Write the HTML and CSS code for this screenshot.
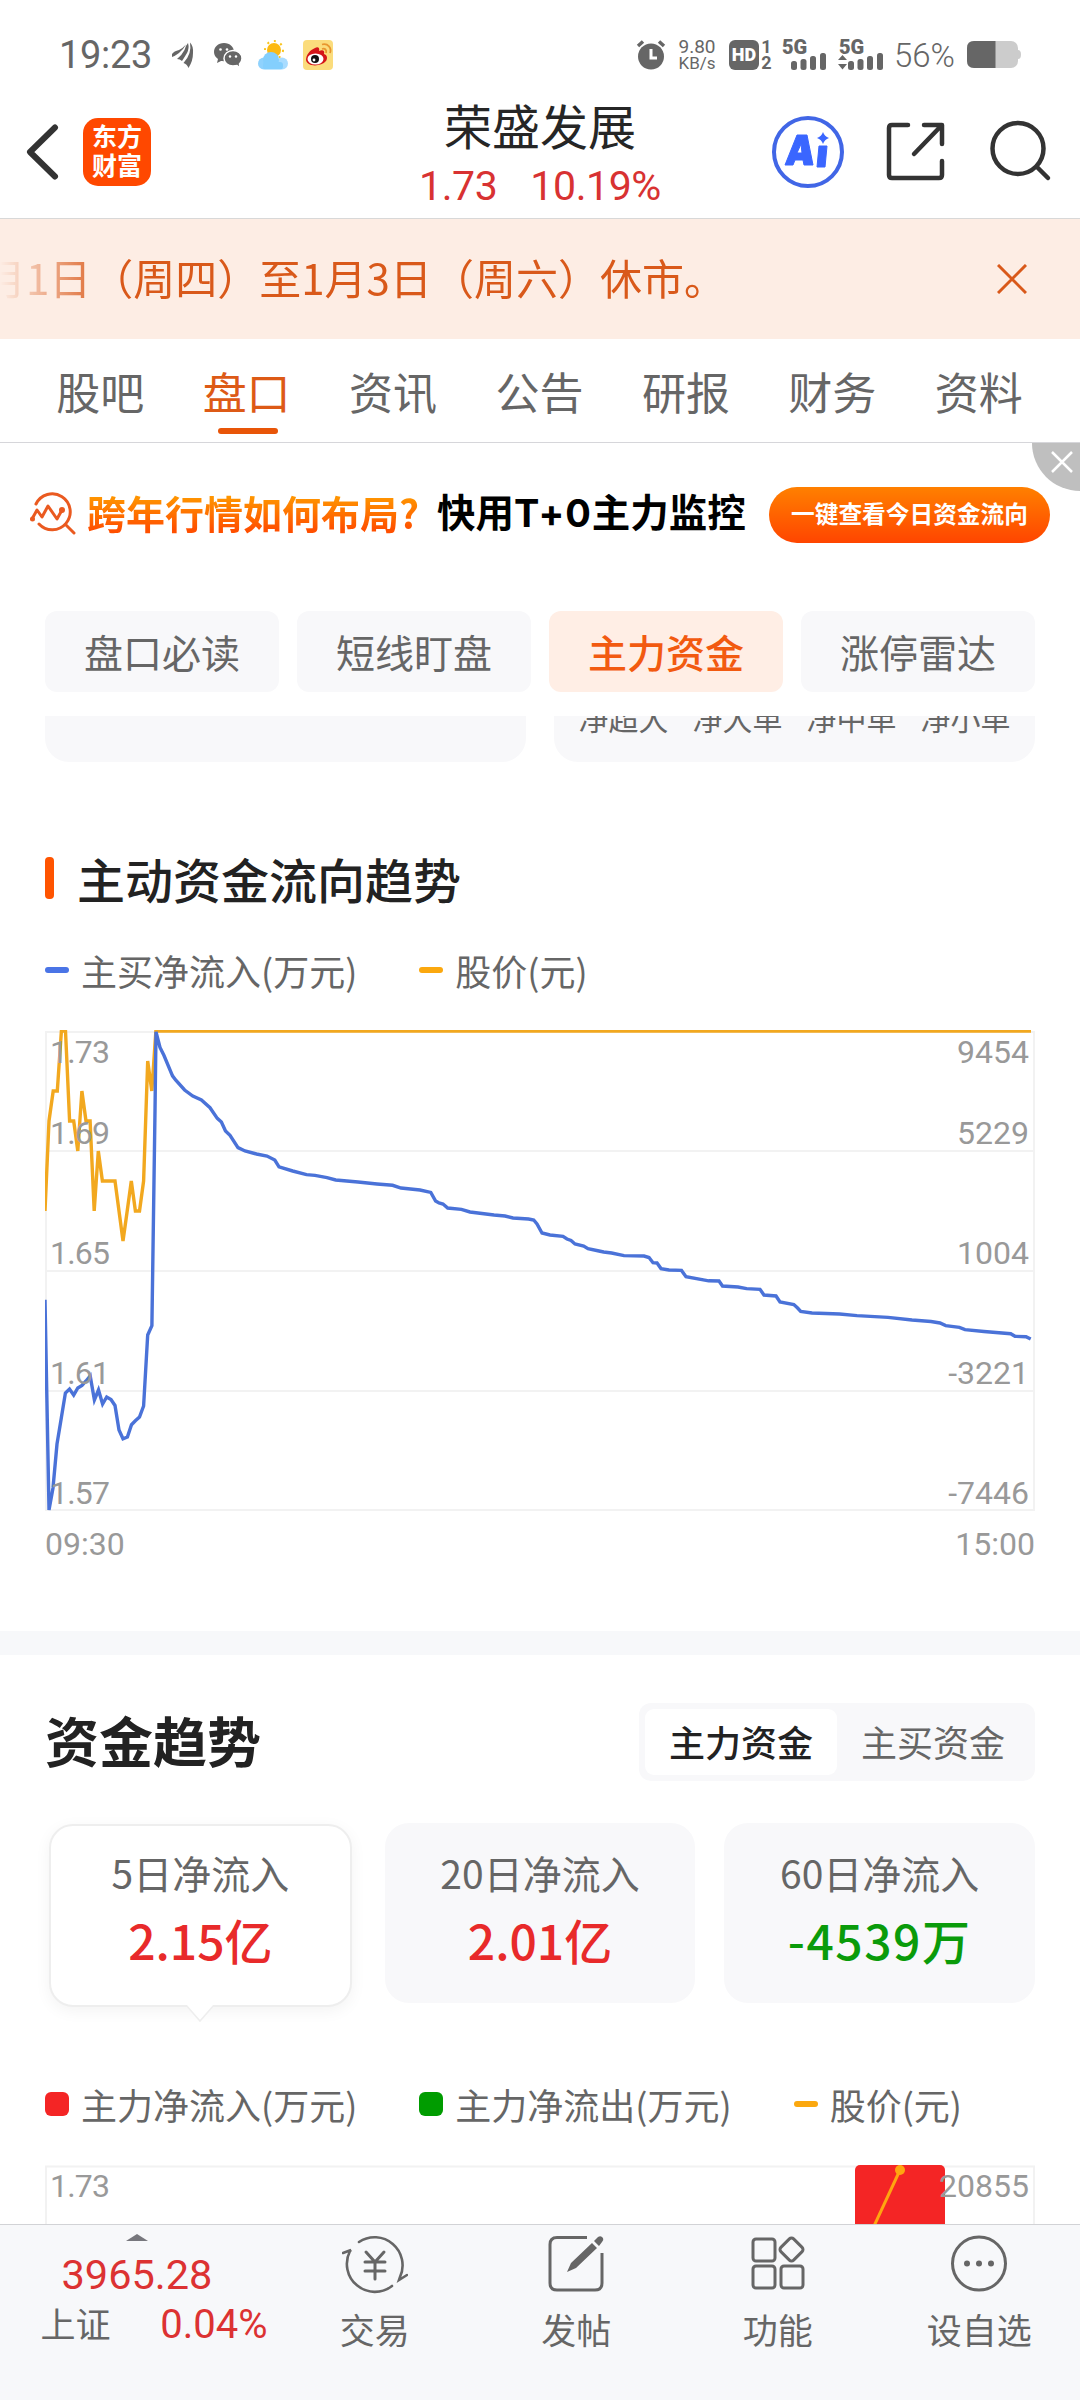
FILE: index.html
```html
<!DOCTYPE html>
<html lang="zh-CN">
<head>
    <meta charset="UTF-8">
    <meta name="viewport" content="width=device-width, initial-scale=1.0">
    <title>荣盛发展</title>
    <link rel="stylesheet" href="styles.css">
</head>
<body>
    <div class="status-bar">
        <span class="time">19:23</span>
        <svg class="icon-plane" width="24" height="28" viewBox="0 0 24 28" fill="#666">
            <path d="M1 13Q3 10 8 9Q12 7 15 3.500Q12 9 8 12Q4 15 1 16Z"/>
            <path d="M6 18Q11 14 13.500 9Q15 4 17 2Q18.500 7 16 12Q13 17 11 20Q9 18 6 18Z"/>
            <path d="M19 1.500Q22.500 5 22 12Q22 20 17.500 27Q16 23 12.500 22Q17 17 18.500 12Q20 7 19 1.500Z"/>
        </svg>
        <svg class="icon-wechat" width="30" height="28" viewBox="0 0 30 28">
            <path d="M11 2C5 2 1 6 1 11C1 14 2.500 16 5 18L4 22L8 20C16 21 21 17 21 11C21 6 17 2 11 2Z" fill="#666"/>
            <path d="M20 9.500C15 9.500 11 13 11 17.500C11 22 15 25 20 25L24 24.500L27 27L26.500 23C28 21.500 29 19.500 29 17.500C29 13 25 9.500 20 9.500Z" fill="#666" stroke="#fff" stroke-width="1.500"/>
            <circle cx="7.500" cy="8.500" r="1.300" fill="#fff"/><circle cx="14" cy="8.500" r="1.300" fill="#fff"/>
            <circle cx="17" cy="15.500" r="1.200" fill="#fff"/><circle cx="23" cy="15.500" r="1.200" fill="#fff"/>
        </svg>
        <svg class="icon-weather" width="30" height="30" viewBox="0 0 30 30">
            <circle cx="16" cy="10" r="9" fill="none" stroke="#f9c51f" stroke-width="2" stroke-dasharray="2 5"/>
            <circle cx="16" cy="10" r="7" fill="#fcb912"/>
            <circle cx="24" cy="23.500" r="6" fill="#a9dcff"/>
            <circle cx="6" cy="23.500" r="6" fill="#8fd2fd"/>
            <circle cx="13" cy="20" r="8" fill="#84cffd"/>
            <rect x="5" y="22" width="20" height="7.500" rx="3" fill="#84cffd"/>
        </svg>
        <svg class="icon-weibo" width="30" height="30" viewBox="0 0 30 30">
            <rect width="30" height="30" rx="4" fill="#fbdc7c"/>
            <path d="M12 8C15 6 17 8 16 11C20 9 22 11 21 14C24 15 25 18 23 21C18 27 4 27 3 20C3 15 7 10 12 8Z" fill="#d41518"/>
            <ellipse cx="12.500" cy="19" rx="8" ry="5.500" fill="#fff"/>
            <circle cx="12" cy="19" r="4" fill="#111"/><circle cx="11" cy="20" r="1.400" fill="#fff"/>
            <path d="M19 9C22 8 24 10 23 13M19 4.500C25 3 29 8 27 13" fill="none" stroke="#e8962e" stroke-width="1.800"/>
        </svg>
        <div class="status-right">
            <svg width="30" height="30" viewBox="0 0 30 30">
                <circle cx="15" cy="16.500" r="13" fill="#666"/>
                <path d="M2 6L7 1.500M28 6L23 1.500" stroke="#666" stroke-width="3.500"/>
                <path d="M15 9V18H21" fill="none" stroke="#fff" stroke-width="3"/>
            </svg>
            <div class="net-speed"><span>9.80</span><span>KB/s</span></div>
            <div class="hd">HD</div>
            <div class="hd-sims"><span>1</span><span>2</span></div>
            <div class="signal">
                <span>5G</span>
                <svg width="36" height="17" viewBox="0 0 36 17" fill="#666">
                    <rect x="0" y="8" width="6" height="9" rx="2.500"/><rect x="9.500" y="6" width="6" height="11" rx="2.500"/>
                    <rect x="19" y="3" width="6" height="14" rx="2.500"/><rect x="29" y="0" width="6" height="17" rx="2.500"/>
                </svg>
            </div>
            <div class="signal signal-2">
                <span>5G</span>
                <svg width="46" height="17" viewBox="-10 0 46 17" fill="#666">
                    <path d="M-10 7L-5.500 2L-1 7ZM-10 11L-5.500 16.500L-1 11Z"/>
                    <rect x="0" y="8" width="6" height="9" rx="2.500"/><rect x="9.500" y="6" width="6" height="11" rx="2.500"/>
                    <rect x="19" y="3" width="6" height="14" rx="2.500"/><rect x="29" y="0" width="6" height="17" rx="2.500"/>
                </svg>
            </div>
            <span class="percent">56%</span>
            <svg width="54" height="28" viewBox="0 0 54 28">
                <rect x="0" y="0" width="51" height="27" rx="7" fill="#ccc"/>
                <path d="M51 9Q54 9 54 13.500Q54 18 51 18Z" fill="#ccc"/>
                <path d="M7 0H28.500V27H7Q0 27 0 20V7Q0 0 7 0Z" fill="#666"/>
            </svg>
        </div>
    </div>

    <header class="header">
        <svg class="back" width="34" height="60" viewBox="0 0 34 60">
            <path d="M29 5.500L4 30L29 54.500" fill="none" stroke="#333" stroke-width="6" stroke-linecap="round" stroke-linejoin="round"/>
        </svg>
        <div class="logo"><span>东方</span><span>财富</span></div>
        <div class="stock">
            <h1>荣盛发展</h1>
            <div class="quote"><span>1.73</span><span>10.19%</span></div>
        </div>
        <div class="header-actions">
            <svg width="74" height="74" viewBox="0 0 74 74">
                <circle cx="37" cy="37" r="34" fill="#fff" stroke="#4166e6" stroke-width="4"/>
                <path d="M26 20H36L42 50H33L32 45H24L22 50H14ZM30 29L26 38H31Z" fill="#3a66ff" stroke="#3a66ff" stroke-linejoin="round" fill-rule="evenodd"/>
                <path d="M48 31H56L54 52H46Z" fill="#3a66ff" stroke="#3a66ff" stroke-linejoin="round"/>
                <path d="M52 17Q53.500 21.500 58 23Q53.500 24.500 52 29Q50.500 24.500 46 23Q50.500 21.500 52 17Z" fill="#3a66ff"/>
            </svg>
            <svg width="60" height="60" viewBox="0 0 60 60" fill="none" stroke="#333" stroke-width="4.500" stroke-linecap="round" stroke-linejoin="round">
                <path d="M22 3H6Q3 3 3 6V53Q3 56 6 56H53Q56 56 56 53V39"/>
                <path d="M38 3H56V22M55 4L28 32"/>
            </svg>
            <svg width="64" height="64" viewBox="0 0 64 64" fill="none" stroke="#333" stroke-width="4.500" stroke-linecap="round">
                <circle cx="29" cy="28.500" r="25.500"/>
                <path d="M48 47L59 58"/>
            </svg>
        </div>
    </header>

    <div class="notice">
        <div class="notice-text">月1日（周四）至1月3日（周六）休市。</div>
        <svg width="30" height="30" viewBox="0 0 30 30">
            <path d="M1 1L29 29M29 1L1 29" stroke="#d9591a" stroke-width="3"/>
        </svg>
    </div>

    <nav class="tabs">
        <a>股吧</a>
        <a class="active">盘口</a>
        <a>资讯</a>
        <a>公告</a>
        <a>研报</a>
        <a>财务</a>
        <a>资料</a>
    </nav>

    <main class="content">
        <div class="ad">
            <svg width="46" height="46" viewBox="0 0 46 46" fill="none" stroke="#ea5a20" stroke-width="3" stroke-linecap="round" stroke-linejoin="round">
                <path d="M6 12A18 18 0 1 1 9 32M36 33L44 41"/>
                <path d="M2 27L7 18L12 25L18 14L27 27L32 18"/>
                <circle cx="32" cy="18" r="1.500"/><circle cx="2.500" cy="27" r="1"/>
            </svg>
            <span class="ad-hot">跨年行情如何布局?</span>
            <span class="ad-text">快用<span class="ad-t0">T+0</span>主力监控</span>
            <span class="ad-button">一键查看今日资金流向</span>
            <span class="ad-close">
                <svg width="22" height="22" viewBox="0 0 22 22"><path d="M1 1L21 21M21 1L1 21" stroke="#fff" stroke-width="2.500"/></svg>
            </span>
        </div>

        <div class="chips">
            <span>盘口必读</span>
            <span>短线盯盘</span>
            <span class="active">主力资金</span>
            <span>涨停雷达</span>
        </div>

        <!-- cards scrolled partly under the sticky chips -->
        <div class="scrolled">
            <div class="scrolled-card"></div>
            <div class="scrolled-card">
                <span>净超大</span><span>净大单</span><span>净中单</span><span>净小单</span>
            </div>
        </div>

        <section class="flow">
            <h2>主动资金流向趋势</h2>
            <div class="legend">
                <span><i class="dash blue"></i>主买净流入(万元)</span>
                <span><i class="dash yellow"></i>股价(元)</span>
            </div>
            <svg class="chart" width="990" height="482" viewBox="0 0 990 482">
                <path d="M1 2H989V480H1ZM1 121H989M1 241H989M1 361H989" fill="none" stroke="#f2f2f2" stroke-width="2"/>
                <polyline class="line-price" points="0,181 4,91 8.200,61 12.300,61 16.400,1 20.500,1 24.600,91 28.700,91 32.800,121 36.900,61 41,91 45.100,91 49.200,181 53.300,121 57.400,151 70,151 74,181 78,211 82.200,181 86.300,151 90.400,181 94.500,181 98.600,151 102.700,31 106.800,61 110.900,1 986,1"/>
                <polyline class="line-flow" points="0,269.700 4,480 8,458 12,414 16.300,388 20.400,363 24.500,359 28.700,365 32.800,358 37,355.500 41,351 45.200,346 49.400,370 53.500,360 57.600,374 61.700,367 66,369.500 70,375.500 74,400 78,408.800 82.400,407 86.500,394.700 90.600,390.600 94.500,387 98.600,376 102.700,305 106.900,295.600 110,81 111,1.800 115,17.400 119,25.500 127.500,45.800 130.600,50 139.600,60 147.800,66 156.400,70 165,77.700 172.300,88.400 176.400,92 180.500,101 185,105.400 193,117.600 200,121 211.500,124 222,126 229.800,130 234,136.900 247.700,141 261.500,144.600 270,145.400 282,147.600 290.700,150 313,152 332,154 347.600,155.300 356,158 375,160 385.800,162.400 390.600,171 394,173 398,174 402.700,178 416.400,179.400 425,182 449,185 460,186 468,188 483.600,189 488.700,190 492,194 497,203 505,205 518,206.400 522,209 526,210.500 530,214 538.700,216 543,218.600 554,221 558.700,222 566.600,223 579,225.600 599,226 604,227.500 608,232.700 612,233 616,238.600 624,240 636.500,240.400 641,246.700 663.700,250.800 674,251 677.500,256 693,257 701.600,258.600 715,259.300 719,265 731,266 735,272 748.800,274.500 752.600,278 755.700,281.500 767,283 794.600,284 812,285.600 843,287.400 867,290 886,291.500 895,293 900.700,295.600 914.400,297.400 920,299.600 939,301.500 965.700,303.700 970,306.300 981,306.700 985.700,309"/>
                <g class="axis axis-left">
                    <text x="5" y="33">1.73</text>
                    <text x="5" y="114">1.69</text>
                    <text x="5" y="234">1.65</text>
                    <text x="5" y="354">1.61</text>
                    <text x="5" y="474">1.57</text>
                </g>
                <g class="axis axis-right">
                    <text x="984" y="33">9454</text>
                    <text x="984" y="114">5229</text>
                    <text x="984" y="234">1004</text>
                    <text x="984" y="354">-3221</text>
                    <text x="984" y="474">-7446</text>
                </g>
            </svg>
            <div class="hours"><span>09:30</span><span>15:00</span></div>
        </section>

        <section class="trend">
            <div class="trend-head">
                <h2>资金趋势</h2>
                <div class="segment">
                    <span class="active">主力资金</span>
                    <span>主买资金</span>
                </div>
            </div>
            <div class="cards">
                <div class="card active">
                    <span>5日净流入</span>
                    <b>2.15亿</b>
                    <svg class="pointer" width="30" height="18" viewBox="0 0 30 18"><path d="M1 0L15 16L29 0" fill="#fff" stroke="#eee" stroke-width="1.500"/></svg>
                </div>
                <div class="card">
                    <span>20日净流入</span>
                    <b>2.01亿</b>
                </div>
                <div class="card">
                    <span>60日净流入</span>
                    <b class="down">-4539万</b>
                </div>
            </div>
            <div class="legend">
                <span><i class="box red"></i>主力净流入(万元)</span>
                <span><i class="box green"></i>主力净流出(万元)</span>
                <span><i class="dash yellow"></i>股价(元)</span>
            </div>
            <svg class="chart" width="990" height="240" viewBox="0 0 990 240">
                <path d="M1 240V1.500H989V240" fill="none" stroke="#f2f2f2" stroke-width="2"/>
                <rect x="810" y="0" width="90" height="240" rx="5" fill="#f42525"/>
                <path d="M855 5L804 115" stroke="#ffa510" stroke-width="3"/>
                <circle cx="855" cy="5" r="5" fill="#ffa510"/>
                <g class="axis axis-left"><text x="5" y="32">1.73</text></g>
                <g class="axis axis-right"><text x="984" y="32">20855</text></g>
            </svg>
        </section>
    </main>

    <footer class="bottom-bar">
        <div class="index">
            <i class="caret"></i>
            <span class="index-value">3965.28</span>
            <div class="index-row"><span>上证</span><span class="index-rate">0.04%</span></div>
        </div>
        <div class="action">
            <svg width="66" height="60" viewBox="0 0 66 60" fill="none" stroke="#666" stroke-width="2.600" stroke-linecap="round">
                <path d="M17 8A28 28 0 0 1 58 43L57 46L65 41M50 52A28 28 0 0 1 8 17L9 16L1 19"/>
                <path d="M24 18L33 28L42 18M33 28V45M23 28H43M23 37H43" stroke-width="3"/>
            </svg>
            <span>交易</span>
        </div>
        <div class="action">
            <svg width="66" height="60" viewBox="0 0 66 60">
                <path d="M44 3.500H14Q7 3.500 7 10.500V49Q7 56 14 56H52Q59 56 59 49V19" fill="none" stroke="#666" stroke-width="3"/>
                <path d="M24 38L28 29L49 9L54 14L33 34ZM51 7L55 3Q58 1 60 4Q61 6 59 8L56 12Z" fill="#666"/>
            </svg>
            <span>发帖</span>
        </div>
        <div class="action">
            <svg width="66" height="60" viewBox="0 0 66 60" fill="none" stroke="#666" stroke-width="3">
                <rect x="8" y="5" width="22" height="22" rx="3"/>
                <rect x="8" y="32" width="22" height="22" rx="3"/>
                <rect x="36" y="32" width="22" height="22" rx="3"/>
                <rect x="37.500" y="6.500" width="18" height="18" rx="3" transform="rotate(45 46.500 15.500)"/>
            </svg>
            <span>功能</span>
        </div>
        <div class="action">
            <svg width="66" height="60" viewBox="0 0 66 60">
                <circle cx="33" cy="29.500" r="26.500" fill="none" stroke="#666" stroke-width="3"/>
                <circle cx="21" cy="29.500" r="3" fill="#666"/><circle cx="33" cy="29.500" r="3" fill="#666"/><circle cx="45" cy="29.500" r="3" fill="#666"/>
            </svg>
            <span>设自选</span>
        </div>
    </footer>
</body>
</html>
```

FILE: styles.css
```css
* {
    margin: 0;
    padding: 0;
    box-sizing: border-box;
}

body {
    width: 1080px;
    height: 2400px;
    overflow: hidden;
    display: flex;
    flex-direction: column;
    background-color: #fff;
    color: #666;
    font-family: "Noto Sans CJK SC", sans-serif;
    line-height: 1;
}

svg {
    display: block;
    flex: none;
}

i {
    display: block;
}

/* status bar */
.status-bar {
    height: 73px;
    flex: none;
    display: flex;
    align-items: center;
    padding: 37px 59px 0 59px;
    font-family: Roboto, sans-serif;
}

.time {
    width: 112px;
    font-size: 38px;
    letter-spacing: -0.3px;
}

.icon-wechat {
    margin-left: 18px;
}

.icon-weather {
    margin-left: 15px;
}

.icon-weibo {
    margin-left: 15px;
}

.status-right {
    margin-left: auto;
    display: flex;
    align-items: center;
}

.net-speed {
    width: 38px;
    margin: 0 13px 0 12px;
    display: flex;
    flex-direction: column;
    align-items: center;
    font-size: 17px;
    line-height: 16px;
}

.net-speed span:first-child {
    font-size: 19px;
}

.hd {
    width: 30px;
    height: 30px;
    border-radius: 6px;
    background-color: #666;
    color: #fff;
    font-size: 18px;
    font-weight: 900;
    line-height: 30px;
    text-align: center;
}

.hd-sims {
    width: 15px;
    margin-right: 8px;
    display: flex;
    flex-direction: column;
    align-items: center;
    font-size: 18px;
    font-weight: bold;
    line-height: 16px;
}

.signal {
    width: 45px;
    height: 30px;
    display: flex;
    flex-direction: column;
    align-items: flex-end;
    font-size: 20px;
    font-weight: 900;
    line-height: 14px;
}

.signal span {
    width: 100%;
    height: 13px;
}

.signal-2 {
    margin: 0 10px 0 12px;
}

.percent {
    width: 64px;
    margin-right: 9px;
    font-size: 33px;
    font-weight: 300;
}

/* header */
.header {
    height: 146px;
    flex: none;
    display: flex;
    align-items: center;
    padding: 12px 27px 0 26px;
    border-bottom: 1px solid #d8d8d8;
    position: relative;
}

.logo {
    width: 68px;
    height: 68px;
    margin-left: 23px;
    border-radius: 15px;
    background-color: #ff4800;
    color: #fff;
    display: flex;
    flex-direction: column;
    align-items: center;
    justify-content: center;
    padding-bottom: 3px;
    font-size: 25px;
    font-weight: bold;
    line-height: 29px;
}

.stock {
    position: absolute;
    left: 0;
    right: 0;
    top: 25px;
    pointer-events: none;
    text-align: center;
}

.stock h1 {
    color: #262626;
    font-size: 48px;
    font-weight: normal;
    line-height: 52px;
}

.quote {
    margin-top: 10px;
    display: flex;
    justify-content: center;
    gap: 33px;
    color: #d83232;
    font-family: Roboto, sans-serif;
    font-size: 41px;
    line-height: 52px;
    letter-spacing: -0.4px;
}

.header-actions {
    margin-left: auto;
    display: flex;
    align-items: center;
}

.header-actions svg:nth-child(2) {
    margin: 0 43px 0 41px;
}

/* notice */
.notice {
    height: 120px;
    flex: none;
    display: flex;
    align-items: center;
    padding-right: 53px;
    background-color: #fdede4;
    color: #d9591a;
}

.notice-text {
    flex: 1;
    margin-top: -5px;
    text-indent: -16px;
    font-size: 42px;
    line-height: 60px;
    white-space: nowrap;
    -webkit-mask-image: linear-gradient(to right, transparent, #000 110px);
    mask-image: linear-gradient(to right, transparent, #000 110px);
}

/* tabs */
.tabs {
    height: 104px;
    flex: none;
    display: flex;
    padding: 0 28px 0 27px;
    border-bottom: 1px solid #d6d6da;
    font-size: 44px;
    line-height: 104px;
    text-align: center;
}

.tabs a {
    flex: 1;
    position: relative;
}

.tabs .active {
    color: #dd5a16;
}

.tabs .active::after {
    content: "";
    position: absolute;
    left: 50%;
    bottom: 8px;
    width: 60px;
    height: 6px;
    margin-left: -29px;
    border-radius: 3px;
    background-color: #e85508;
}

.content {
    flex: 1;
    min-height: 0;
    overflow: hidden;
}

/* ad banner */
.ad {
    height: 143px;
    display: flex;
    align-items: center;
    padding: 0 30px;
    position: relative;
    font-weight: bold;
    white-space: nowrap;
}

.ad-hot {
    width: 350px;
    margin: -6px 0 0 11px;
    font-size: 39px;
    line-height: 50px;
    background: linear-gradient(#ff9a00 15%, #ff5000 85%);
    -webkit-background-clip: text;
    background-clip: text;
    color: transparent;
}

.ad-text {
    width: 316px;
    margin-top: -6px;
    color: #000;
    font-size: 38.500px;
}

.ad-t0 {
    font-family: Inter, sans-serif;
    font-size: 38px;
    letter-spacing: 1px;
}

.ad-button {
    width: 281px;
    height: 56px;
    margin-left: 16px;
    border-radius: 28px;
    background: linear-gradient(#ff8000, #ff4500);
    color: #fff;
    font-size: 23.700px;
    line-height: 52px;
    text-align: center;
}

.ad-close {
    position: absolute;
    top: 0;
    right: 0;
    width: 48px;
    height: 48px;
    padding: 8px 0 0 19px;
    border-bottom-left-radius: 48px;
    background-color: #bfbfbf;
}

/* chips */
.chips {
    display: flex;
    gap: 18px;
    padding: 25px 45px 24px;
}

.chips span {
    flex: 1;
    height: 81px;
    border-radius: 12px;
    background-color: #f8f8fa;
    font-size: 39px;
    line-height: 80px;
    text-align: center;
}

.chips .active {
    background-color: #ffeee5;
    color: #f25a10;
    font-weight: 500;
}

.scrolled {
    height: 46px;
    overflow: hidden;
    display: flex;
    align-items: flex-end;
    gap: 28px;
    padding: 0 45px;
}

.scrolled-card {
    flex: 1;
    height: 90px;
    display: flex;
    justify-content: center;
    align-items: flex-end;
    gap: 24px;
    padding-bottom: 30px;
    border-radius: 24px;
    background-color: #f8f8fa;
    font-size: 30px;
}

/* fund flow chart */
.flow {
    height: 869px;
    padding: 86px 45px 0;
}

.flow h2 {
    display: flex;
    align-items: center;
    color: #222;
    font-size: 48px;
    font-weight: 500;
    line-height: 60px;
}

.flow h2::before {
    content: "";
    width: 9px;
    height: 42px;
    margin: 0 23px 0 0;
    border-radius: 4px;
    background-color: #ff5400;
}

.legend {
    display: flex;
    gap: 62px;
    margin-top: 40px;
    font-size: 36px;
    line-height: 44px;
}

.legend span {
    display: flex;
    align-items: center;
}

.dash {
    width: 24px;
    height: 6px;
    margin-right: 12px;
    border-radius: 3px;
}

.box {
    width: 24px;
    height: 24px;
    margin-right: 12px;
    border-radius: 6px;
}

.blue {
    background-color: #4a74e6;
}

.yellow {
    background-color: #fba80f;
}

.red {
    background-color: #f42525;
}

.green {
    background-color: #009c00;
}

.chart {
    margin-top: 38px;
}

.line-price,
.line-flow {
    fill: none;
    stroke: #f2a81f;
    stroke-width: 3.400;
}

.line-flow {
    stroke: #4a72d8;
}

.axis {
    fill: #999;
    font-family: Roboto, sans-serif;
    font-size: 32px;
}

.axis-left {
    letter-spacing: -0.8px;
}

.axis-right {
    text-anchor: end;
}

.hours {
    display: flex;
    justify-content: space-between;
    margin-top: 10px;
    color: #999;
    font-family: Roboto, sans-serif;
    font-size: 32px;
    line-height: 44px;
}

/* fund trend */
.trend {
    padding: 48px 45px 0;
    border-top: 24px solid #f7f8fa;
}

.trend-head {
    display: flex;
    justify-content: space-between;
    align-items: center;
}

.trend-head h2 {
    margin-top: -5px;
    color: #222;
    font-size: 54px;
    font-weight: bold;
}

.segment {
    display: flex;
    width: 396px;
    height: 78px;
    padding: 6px;
    border-radius: 12px;
    background-color: #f8f8fa;
    font-size: 36px;
    line-height: 65px;
    text-align: center;
}

.segment span {
    flex: 1;
    border-radius: 9px;
}

.segment .active {
    background-color: #fff;
    color: #222;
    font-weight: 500;
}

.cards {
    display: grid;
    grid-template-columns: repeat(3, 1fr);
    gap: 29px;
    height: 180px;
    margin-top: 42px;
}

.card {
    padding-top: 22px;
    border-radius: 24px;
    background-color: #f8f8fa;
    text-align: center;
    position: relative;
}

.card span {
    display: block;
    font-size: 39px;
    line-height: 54px;
}

.card b {
    display: block;
    margin-top: 7px;
    color: #e82a2a;
    font-size: 48px;
    font-weight: 500;
    line-height: 66px;
}

.card .down {
    color: #0a9b0a;
    letter-spacing: 1.500px;
}

.card.active {
    margin: 1px 4px -4px;
    padding-top: 19px;
    border: 2px solid #eee;
    background-color: #fff;
    box-shadow: 0 4px 16px rgba(0, 0, 0, 0.05);
}

.pointer {
    position: absolute;
    left: 50%;
    bottom: -18px;
    margin-left: -15px;
}

.trend .legend {
    margin-top: 79px;
}

.trend .chart {
    margin-top: 39px;
}

/* bottom bar */
.bottom-bar {
    height: 176px;
    flex: none;
    display: flex;
    border-top: 1px solid #d2d3d6;
    background-color: #f7f8fa;
}

.index {
    width: 274px;
    display: flex;
    flex-direction: column;
    align-items: center;
    padding-top: 9px;
}

.caret {
    border: 11px solid transparent;
    border-top: none;
    border-bottom: 7px solid #77777d;
}

.index-value {
    margin-top: 9px;
    color: #dc3232;
    font-family: Roboto, sans-serif;
    font-size: 41.500px;
    line-height: 50px;
}

.index-row {
    width: 227px;
    margin: -2px 0 0 34px;
    display: flex;
    justify-content: space-between;
    font-size: 35px;
    line-height: 50px;
}

.index-rate {
    margin-top: 2px;
    color: #dc3232;
    font-family: Roboto, sans-serif;
    font-size: 40px;
}

.action {
    flex: 1;
    display: flex;
    flex-direction: column;
    align-items: center;
    padding-top: 9px;
    font-size: 35px;
    line-height: 50px;
}

.action span {
    margin-top: 10px;
}
```
